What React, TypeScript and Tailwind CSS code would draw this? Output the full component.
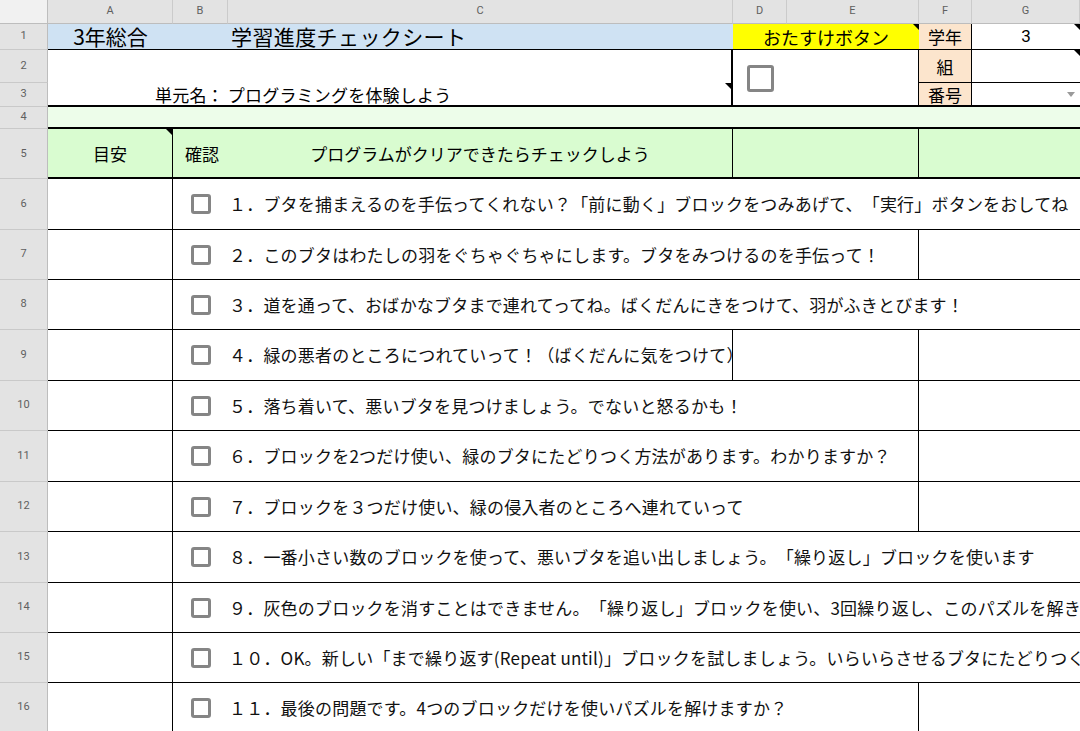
import React from "react";

type Span = "full" | "toE" | "toC";

const tasks: { text: string; span: Span; h: string }[] = [
  { text: "１．ブタを捕まえるのを手伝ってくれない？「前に動く」ブロックをつみあげて、「実行」ボタンをおしてね", span: "full", h: "h-[51px]" },
  { text: "２．このブタはわたしの羽をぐちゃぐちゃにします。ブタをみつけるのを手伝って！", span: "toE", h: "h-[50px]" },
  { text: "３．道を通って、おばかなブタまで連れてってね。ばくだんにきをつけて、羽がふきとびます！", span: "full", h: "h-[50px]" },
  { text: "４．緑の悪者のところにつれていって！（ばくだんに気をつけて）", span: "toC", h: "h-[51px]" },
  { text: "５．落ち着いて、悪いブタを見つけましょう。でないと怒るかも！", span: "toE", h: "h-[50px]" },
  { text: "６．ブロックを2つだけ使い、緑のブタにたどりつく方法があります。わかりますか？", span: "toE", h: "h-[51px]" },
  { text: "７．ブロックを３つだけ使い、緑の侵入者のところへ連れていって", span: "toE", h: "h-[50px]" },
  { text: "８．一番小さい数のブロックを使って、悪いブタを追い出しましょう。「繰り返し」ブロックを使います", span: "full", h: "h-[51px]" },
  { text: "９．灰色のブロックを消すことはできません。「繰り返し」ブロックを使い、3回繰り返し、このパズルを解き", span: "full", h: "h-[50px]" },
  { text: "１０．OK。新しい「まで繰り返す(Repeat until)」ブロックを試しましょう。いらいらさせるブタにたどりつく", span: "full", h: "h-[50px]" },
  { text: "１１．最後の問題です。4つのブロックだけを使いパズルを解けますか？", span: "toE", h: "h-[50px]" },
];

const colHeads: { label: string; w: string }[] = [
  { label: "A", w: "w-[125px]" },
  { label: "B", w: "w-[55px]" },
  { label: "C", w: "w-[505px]" },
  { label: "D", w: "w-[54px]" },
  { label: "E", w: "w-[132px]" },
  { label: "F", w: "w-[53px]" },
  { label: "G", w: "flex-1" },
];

function RowHead({ n, h }: { n: number; h?: string }) {
  return (
    <div
      className={`${h ?? "h-full"} w-[48px] shrink-0 box-border bg-[#e3e3e3] border-r border-b border-r-[#bdbdbd] border-b-[#c9c9c9] flex items-center justify-center text-[11px] text-[#5f5f5f] font-['Roboto','Liberation_Sans',sans-serif]`}
    >
      {n}
    </div>
  );
}

// small black corner mark for cells holding a note
function NoteMark() {
  return (
    <div className="absolute top-0 right-0 w-0 h-0 border-t-[6px] border-l-[6px] border-t-black border-l-transparent" />
  );
}

function Box({ big }: { big?: boolean }) {
  return big ? (
    <div className="w-[27px] h-[27px] box-border border-[3px] border-[#858585] rounded-[3px] bg-white" />
  ) : (
    <div className="w-[20px] h-[20px] shrink-0 box-border border-[3px] border-[#858585] rounded-[3px] bg-white" />
  );
}

function TaskRow({ n, text, span, h }: { n: number; text: string; span: Span; h: string }) {
  const content = (
    <div className={`flex items-center h-full whitespace-nowrap ${span === "toC" ? "overflow-visible" : "overflow-hidden"}`}>
      <div className="ml-[18px]">
        <Box />
      </div>
      <span className="ml-[18px] text-[17px] tracking-[0.2px] text-[#111]">{text}</span>
    </div>
  );
  return (
    <div className={`flex ${h}`}>
      <RowHead n={n} />
      <div className="w-[125px] shrink-0 box-border border-r border-b border-black bg-white" />
      {span === "full" && <div className="flex-1 min-w-0 box-border border-b border-black bg-white">{content}</div>}
      {span === "toE" && (
        <>
          <div className="w-[746px] shrink-0 box-border border-r border-b border-black bg-white">{content}</div>
          <div className="flex-1 box-border border-b border-black bg-white" />
        </>
      )}
      {span === "toC" && (
        <>
          <div className="w-[560px] shrink-0 box-border border-r border-b border-black bg-white">{content}</div>
          <div className="w-[186px] shrink-0 box-border border-r border-b border-black bg-white" />
          <div className="flex-1 box-border border-b border-black bg-white" />
        </>
      )}
    </div>
  );
}

export default function App() {
  return (
    <div className="w-[1080px] h-[731px] overflow-hidden bg-white font-['Noto_Sans_CJK_JP',sans-serif] text-black [text-spacing-trim:space-all]">
      {/* column letters */}
      <div className="flex h-[24px]">
        <div className="w-[48px] shrink-0 box-border bg-[#f1f1f1] border-r border-b border-r-[#bdbdbd] border-b-[#bdbdbd]" />
        {colHeads.map((c) => (
          <div
            key={c.label}
            className={`${c.w} shrink-0 box-border bg-[#e3e3e3] border-r border-b border-r-[#cbcbcb] border-b-[#bdbdbd] flex items-center justify-center text-[11px] text-[#5f5f5f] font-['Roboto','Liberation_Sans',sans-serif]`}
          >
            {c.label}
          </div>
        ))}
      </div>

      {/* row 1: title */}
      <div className="flex h-[26px]">
        <RowHead n={1} />
        <div className="w-[685px] shrink-0 box-border border-b border-black bg-[#cfe2f3] flex items-center text-[21px] leading-none">
          <div className="w-[125px] text-center">3年総合</div>
          <div className="w-[55px]" />
          <div className="pl-[3px] tracking-[0.4px]">学習進度チェックシート</div>
        </div>
        <div className="relative w-[186px] shrink-0 box-border border-b border-black bg-[#ffff00] flex items-center justify-center text-[18px] leading-none">
          おたすけボタン
          <NoteMark />
        </div>
        <div className="w-[53px] shrink-0 box-border border-r border-b border-black bg-[#fce5cd] flex items-center justify-center text-[17px] leading-none">
          学年
        </div>
        <div className="relative flex-1 box-border border-b border-black bg-white flex items-center justify-center text-[17px] leading-none font-['Roboto','Liberation_Sans',sans-serif]">
          3
          <NoteMark />
        </div>
      </div>

      {/* rows 2-3: unit name */}
      <div className="flex h-[57px]">
        <div className="flex flex-col w-[48px] shrink-0">
          <RowHead n={2} h="h-[33px]" />
          <RowHead n={3} h="h-[24px]" />
        </div>
        <div className="relative w-[685px] shrink-0 box-border border-b-2 border-r-2 border-black bg-white flex flex-col justify-end">
          <div className="h-[22px] flex items-center pl-[107px] text-[17px] leading-none tracking-[0.2px]">単元名： プログラミングを体験しよう</div>
          <div className="absolute top-[33px] right-0 w-0 h-0 border-t-[6px] border-l-[6px] border-t-black border-l-transparent" />
        </div>
        <div className="w-[186px] shrink-0 box-border border-b-2 border-r border-black bg-white pl-[14px] pt-[15px]">
          <Box big />
        </div>
        <div className="flex-1 flex flex-col">
          <div className="flex h-[33px]">
            <div className="w-[53px] shrink-0 box-border border-r border-b border-black bg-[#fce5cd] flex items-center justify-center text-[17px] leading-none">
              組
            </div>
            <div className="relative flex-1 box-border border-b border-black bg-white">
              <NoteMark />
            </div>
          </div>
          <div className="flex flex-1">
            <div className="w-[53px] shrink-0 box-border border-r border-b-2 border-black bg-[#fce5cd] flex items-center justify-center text-[17px] leading-none">
              番号
            </div>
            <div className="flex-1 box-border border-b-2 border-black bg-white flex items-center justify-end pr-[5px]">
              <div className="w-0 h-0 border-l-[4px] border-r-[4px] border-t-[5px] border-l-transparent border-r-transparent border-t-[#9a9a9a]" />
            </div>
          </div>
        </div>
      </div>

      {/* row 4: spacer band */}
      <div className="flex h-[22px]">
        <RowHead n={4} />
        <div className="flex-1 box-border border-b-2 border-black bg-[#edfdea]" />
      </div>

      {/* row 5: column captions */}
      <div className="flex h-[50px] text-[17px] leading-none">
        <RowHead n={5} />
        <div className="relative w-[125px] shrink-0 box-border border-r border-b-2 border-black bg-[#d9fcd0] flex items-center justify-center">
          目安
          <NoteMark />
        </div>
        <div className="w-[560px] shrink-0 box-border border-r border-b-2 border-black bg-[#d9fcd0] flex items-center">
          <div className="w-[55px] pl-[12px] whitespace-nowrap">確認</div>
          <div className="w-[504px] text-center">プログラムがクリアできたらチェックしよう</div>
        </div>
        <div className="w-[186px] shrink-0 box-border border-r border-b-2 border-black bg-[#d9fcd0]" />
        <div className="flex-1 box-border border-b-2 border-black bg-[#d9fcd0]" />
      </div>

      {/* rows 6-16: tasks */}
      {tasks.map((t, i) => (
        <TaskRow key={i} n={i + 6} text={t.text} span={t.span} h={t.h} />
      ))}
    </div>
  );
}
